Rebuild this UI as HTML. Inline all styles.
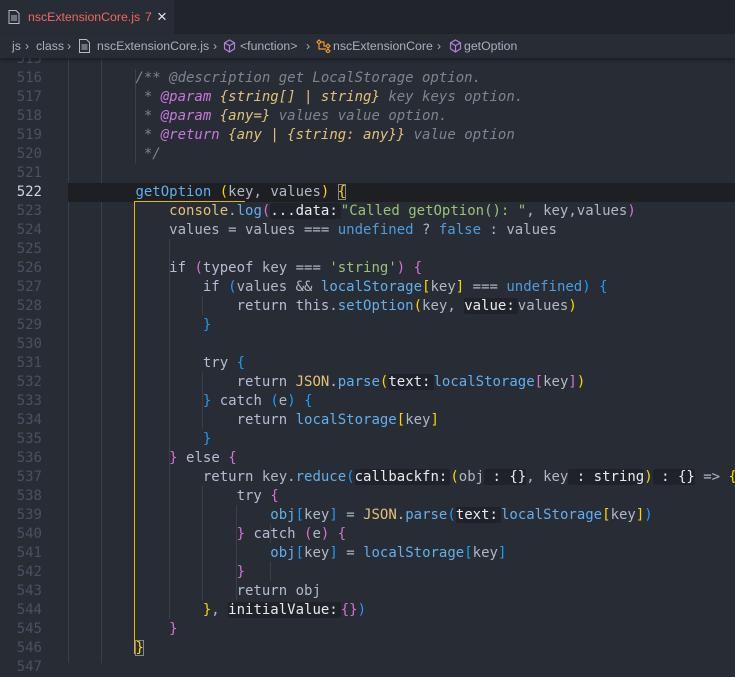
<!DOCTYPE html>
<html><head><style>
body{margin:0;width:735px;height:663px;overflow:hidden;background:#282c34;font-family:"Liberation Sans",sans-serif;position:relative}
.tabbar{position:absolute;left:0;top:0;width:735px;height:34px;background:#21252b}
.tab{position:absolute;left:0;top:0;width:174px;height:34px;background:#282c34;color:#f0695f;font-size:12.3px;line-height:34px}
.bc{position:absolute;left:0;top:34px;width:735px;height:24px;background:#282c34;color:#a9b1bd;font-size:12.3px;line-height:24px;z-index:5;box-shadow:0 2px 4px rgba(0,0,0,.35)}
.bc span{position:absolute;white-space:nowrap}
.ed{position:absolute;left:0;top:50px;width:735px;font-family:"DejaVu Sans Mono",monospace;font-size:14px}
.l{height:19px;line-height:19px;white-space:pre;position:relative}
.n{position:absolute;left:0;width:42px;text-align:right;color:#495162}
.c{position:absolute;left:68px;color:#b0b8c6}
.cm{color:#7f848e;font-style:italic}.tg{color:#c678dd;font-style:italic}.ty{color:#e5c07b;font-style:italic}
.f{color:#61afef}.y{color:#e5c07b}.s{color:#98c379}.k{color:#b6bcd6}.u{color:#4f9ddc}.v{color:#b0b8c6}
.g{color:#ffd700}.p{color:#da70d6}.b{color:#179fff}
.h{background:#1f2329;color:#e8eaee;border-radius:2px;padding-right:3px}
.h2{background:#1f2329;color:#e8eaee;border-radius:2px}
.guide{position:absolute;width:1px;background:#3b4048}
</style></head><body>
<div class="tabbar"><div class="tab">
<svg style="position:absolute;left:8px;top:10px" width="12" height="14" viewBox="0 0 12 14"><path d="M1 .5h7l3 3v10H1z" fill="none" stroke="#b5bac3"/><path d="M3 6h6M3 8h6M3 10h6" stroke="#b5bac3"/></svg>
<span style="position:absolute;left:28px">nscExtensionCore.js</span><span style="position:absolute;left:145px">7</span>
<span style="position:absolute;left:157px;color:#e6e6e6;font-size:17px">×</span></div></div>
<div class="bc"><span style="left:12px">js</span><span style="left:25px">›</span><span style="left:36px">class</span><span style="left:67px">›</span>
<svg style="position:absolute;left:79px;top:5px" width="11" height="14" viewBox="0 0 11 14"><path d="M.5 .5h7l3 3v10H.5z" fill="none" stroke="#b5bac3"/><path d="M2.5 6h6M2.5 8h6M2.5 10h6" stroke="#b5bac3"/></svg>
<span style="left:97px">nscExtensionCore.js</span><span style="left:213px">›</span>
<svg style="position:absolute;left:223px;top:5px" width="13" height="14" viewBox="0 0 13 14"><path d="M6.5 1l5 2.8v6L6.5 13 1.5 9.8v-6zM1.5 3.8l5 2.8 5-2.8M6.5 6.6V13" fill="none" stroke="#b180d7" stroke-width="1.2"/></svg>
<span style="left:240px">&lt;function&gt;</span><span style="left:306px">›</span>
<svg style="position:absolute;left:316px;top:5px" width="15" height="14" viewBox="0 0 15 14"><path d="M1 3l2-2 2 2-2 2zM10 7l2-2 2 2-2 2zM10 12l2-2 2 2-2 2zM3 5v5h7M5 3h3v4h2" fill="none" stroke="#ee9d28" stroke-width="1.2"/></svg>
<span style="left:333px">nscExtensionCore</span><span style="left:437px">›</span>
<svg style="position:absolute;left:449px;top:5px" width="13" height="14" viewBox="0 0 13 14"><path d="M6.5 1l5 2.8v6L6.5 13 1.5 9.8v-6zM1.5 3.8l5 2.8 5-2.8M6.5 6.6V13" fill="none" stroke="#b180d7" stroke-width="1.2"/></svg>
<span style="left:464px">getOption</span></div>
<div class="guide" style="left:68px;top:58px;height:605px"></div>
<div class="guide" style="left:101px;top:58px;height:605px"></div>
<div class="guide" style="left:169px;top:239px;height:380px"></div>
<div class="guide" style="left:202px;top:296px;height:19px"></div>
<div class="guide" style="left:202px;top:372px;height:57px"></div>
<div class="guide" style="left:202px;top:486px;height:114px"></div>
<div class="guide" style="left:236px;top:505px;height:95px"></div>
<div class="guide" style="left:270px;top:524px;height:19px"></div>
<div class="guide" style="left:270px;top:562px;height:19px"></div>
<div class="guide" style="left:135px;top:69px;height:95px"></div>
<div class="ed">
<div class="l"><span class="n">515</span></div>
<div class="l"><span class="n">516</span><span class="c cm">        /** @description get LocalStorage option.</span></div>
<div class="l"><span class="n">517</span><span class="c cm">         * <span class="tg">@param</span> <span class="ty">{string[] | string}</span> key keys option.</span></div>
<div class="l"><span class="n">518</span><span class="c cm">         * <span class="tg">@param</span> <span class="ty">{any=}</span> values value option.</span></div>
<div class="l"><span class="n">519</span><span class="c cm">         * <span class="tg">@return</span> <span class="ty">{any | {string: any}}</span> value option</span></div>
<div class="l"><span class="n">520</span><span class="c cm">         */</span></div>
<div class="l"><span class="n">521</span></div>
<div class="l"><div style="position:absolute;left:68px;right:0;top:0;height:19px;background:#1d1f23"></div><span class="n" style="color:#d0d4dc">522</span><span class="c">        <span class="f">getOption</span> <span class="g">(</span>key, values<span class="g">)</span> <span class="g" style="outline:1px solid #888;outline-offset:-1px">{</span></span></div>
<div class="l"><span class="n">523</span><span class="c">            <span class="y">console</span>.<span class="f">log</span><span class="p">(</span><span class="h">...data:</span><span class="s">"Called getOption(): "</span>, key,values<span class="p">)</span></span></div>
<div class="l"><span class="n">524</span><span class="c">            values = values === <span class="u">undefined</span> ? <span class="u">false</span> : values</span></div>
<div class="l"><span class="n">525</span></div>
<div class="l"><span class="n">526</span><span class="c">            <span class="k">if</span> <span class="p">(</span><span class="k">typeof</span> key === <span class="s">'string'</span><span class="p">)</span> <span class="p">{</span></span></div>
<div class="l"><span class="n">527</span><span class="c">                <span class="k">if</span> <span class="b">(</span>values &amp;&amp; <span class="f">localStorage</span><span class="g">[</span>key<span class="g">]</span> === <span class="u">undefined</span><span class="b">)</span> <span class="b">{</span></span></div>
<div class="l"><span class="n">528</span><span class="c">                    <span class="k">return this</span>.<span class="f">setOption</span><span class="g">(</span>key, <span class="h">value:</span>values<span class="g">)</span></span></div>
<div class="l"><span class="n">529</span><span class="c">                <span class="b">}</span></span></div>
<div class="l"><span class="n">530</span></div>
<div class="l"><span class="n">531</span><span class="c">                <span class="k">try</span> <span class="b">{</span></span></div>
<div class="l"><span class="n">532</span><span class="c">                    <span class="k">return</span> <span class="y">JSON</span>.<span class="f">parse</span><span class="g">(</span><span class="h">text:</span><span class="f">localStorage</span><span class="p">[</span>key<span class="p">]</span><span class="g">)</span></span></div>
<div class="l"><span class="n">533</span><span class="c">                <span class="b">}</span> <span class="k">catch</span> <span class="b">(</span>e<span class="b">)</span> <span class="b">{</span></span></div>
<div class="l"><span class="n">534</span><span class="c">                    <span class="k">return</span> <span class="f">localStorage</span><span class="g">[</span>key<span class="g">]</span></span></div>
<div class="l"><span class="n">535</span><span class="c">                <span class="b">}</span></span></div>
<div class="l"><span class="n">536</span><span class="c">            <span class="p">}</span> <span class="k">else</span> <span class="p">{</span></span></div>
<div class="l"><span class="n">537</span><span class="c">                <span class="k">return</span> key.<span class="f">reduce</span><span class="b">(</span><span class="h">callbackfn:</span><span class="g">(</span>obj<span class="h2"> : {}</span>, key<span class="h2"> : string</span><span class="g">)</span><span class="h2"> : {}</span> =&gt; <span class="g">{</span></span></div>
<div class="l"><span class="n">538</span><span class="c">                    <span class="k">try</span> <span class="p">{</span></span></div>
<div class="l"><span class="n">539</span><span class="c">                        <span class="f">obj</span><span class="b">[</span>key<span class="b">]</span> = <span class="y">JSON</span>.<span class="f">parse</span><span class="b">(</span><span class="h">text:</span><span class="f">localStorage</span><span class="g">[</span>key<span class="g">]</span><span class="b">)</span></span></div>
<div class="l"><span class="n">540</span><span class="c">                    <span class="p">}</span> <span class="k">catch</span> <span class="p">(</span>e<span class="p">)</span> <span class="p">{</span></span></div>
<div class="l"><span class="n">541</span><span class="c">                        <span class="f">obj</span><span class="b">[</span>key<span class="b">]</span> = <span class="f">localStorage</span><span class="b">[</span>key<span class="b">]</span></span></div>
<div class="l"><span class="n">542</span><span class="c">                    <span class="p">}</span></span></div>
<div class="l"><span class="n">543</span><span class="c">                    <span class="k">return</span> obj</span></div>
<div class="l"><span class="n">544</span><span class="c">                <span class="g">}</span>, <span class="h">initialValue:</span><span class="p">{}</span><span class="b">)</span></span></div>
<div class="l"><span class="n">545</span><span class="c">            <span class="p">}</span></span></div>
<div class="l"><span class="n">546</span><span class="c">        <span class="g" style="outline:1px solid #888;outline-offset:-1px">}</span></span></div>
<div class="l"><span class="n">547</span></div>
</div>
<div style="position:absolute;left:134px;top:201px;width:1px;height:453px;background:#e5b800"></div>
<div style="position:absolute;left:134px;top:201px;width:111px;height:1px;background:#e5b800"></div>
</body></html>
